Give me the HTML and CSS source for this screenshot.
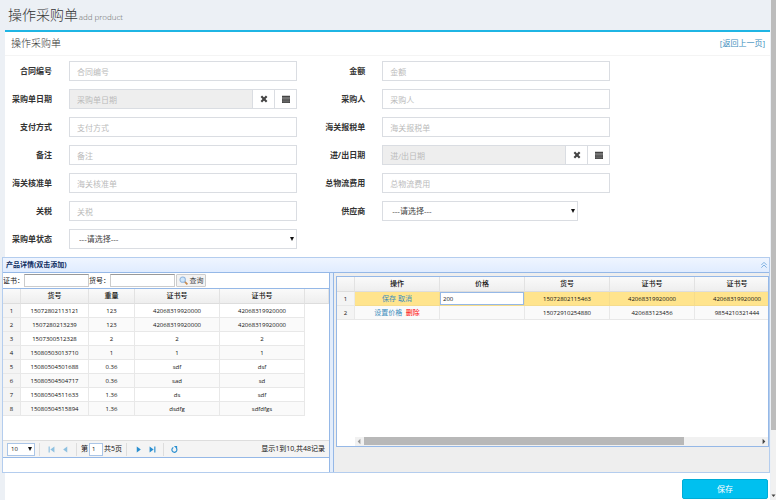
FILE: index.html
```html
<!DOCTYPE html>
<html lang="zh-CN">
<head>
    <meta charset="UTF-8">
    <meta name="viewport" content="width=device-width, initial-scale=1.0">
    <title>操作采购单</title>
    <link rel="stylesheet" href="styles.css">
</head>
<body>
    <div class="page">
        <header class="content-header">
            <h1>操作采购单 <small>add product</small></h1>
        </header>

        <main class="box">
            <div class="box-header">
                <h2>操作采购单</h2>
                <a href="#">[返回上一页]</a>
            </div>

            <!-- 采购单表单 -->
            <form class="order-form" id="orderForm">
                <label for="contractNo">合同编号</label>
                <input class="form-control" id="contractNo" type="text" placeholder="合同编号">
                <label for="amount">金额</label>
                <input class="form-control" id="amount" type="text" placeholder="金额">

                <label for="orderDate">采购单日期</label>
                <div class="input-group">
                    <input class="form-control" id="orderDate" type="text" placeholder="采购单日期" readonly>
                    <button type="button" class="addon" aria-label="清除">
                        <svg viewBox="0 0 12 12"><path d="M2 2l8 8M10 2l-8 8" stroke="#444" stroke-width="3.2"/></svg>
                    </button>
                    <button type="button" class="addon" aria-label="选择日期">
                        <svg viewBox="0 0 12 12"><path d="M0 1h12v3H0zM0 5h12v7H0z" fill="#444"/><path d="M0 7.300h12M0 9.600h12M3 5v7M6 5v7M9 5v7" stroke="#999" stroke-width=".5"/></svg>
                    </button>
                </div>
                <label for="buyer">采购人</label>
                <input class="form-control" id="buyer" type="text" placeholder="采购人">

                <label for="payment">支付方式</label>
                <input class="form-control" id="payment" type="text" placeholder="支付方式">
                <label for="customsBill">海关报税单</label>
                <input class="form-control" id="customsBill" type="text" placeholder="海关报税单">

                <label for="remark">备注</label>
                <input class="form-control" id="remark" type="text" placeholder="备注">
                <label for="inOutDate">进/出日期</label>
                <div class="input-group">
                    <input class="form-control" id="inOutDate" type="text" placeholder="进/出日期" readonly>
                    <button type="button" class="addon" aria-label="清除">
                        <svg viewBox="0 0 12 12"><path d="M2 2l8 8M10 2l-8 8" stroke="#444" stroke-width="3.2"/></svg>
                    </button>
                    <button type="button" class="addon" aria-label="选择日期">
                        <svg viewBox="0 0 12 12"><path d="M0 1h12v3H0zM0 5h12v7H0z" fill="#444"/><path d="M0 7.300h12M0 9.600h12M3 5v7M6 5v7M9 5v7" stroke="#999" stroke-width=".5"/></svg>
                    </button>
                </div>

                <label for="approval">海关核准单</label>
                <input class="form-control" id="approval" type="text" placeholder="海关核准单">
                <label for="logistics">总物流费用</label>
                <input class="form-control" id="logistics" type="text" placeholder="总物流费用">

                <label for="tariff">关税</label>
                <input class="form-control" id="tariff" type="text" placeholder="关税">
                <label for="supplier">供应商</label>
                <div class="select-wrap supplier">
                    <select class="form-control" id="supplier"><option>---请选择---</option></select>
                </div>

                <label for="orderState">采购单状态</label>
                <div class="select-wrap">
                    <select class="form-control" id="orderState"><option>---请选择---</option></select>
                </div>
            </form>

            <!-- 产品详情 -->
            <section class="panel">
                <div class="panel-header">
                    <h3>产品详情(双击添加)</h3>
                    <button type="button" class="collapse" aria-label="收起">
                        <svg viewBox="0 0 12 12"><path d="M2 6l4-4 4 4M2 10l4-4 4 4" fill="none" stroke="#6fa8dc" stroke-width="1.3"/></svg>
                    </button>
                </div>
                <div class="panel-body">
                    <div class="product-list">
                        <div class="toolbar">
                            <label for="certNo">证书：</label>
                            <input id="certNo" type="text">
                            <label for="itemNo">货号：</label>
                            <input id="itemNo" type="text">
                            <button type="button">
                                <svg viewBox="0 0 16 16"><path d="M10 10l5 5" stroke="#c98a4b" stroke-width="3"/><circle cx="6.500" cy="6.500" r="4.800" fill="#cfe6fa" stroke="#8fb4dd" stroke-width="1.800"/></svg>
                                查询
                            </button>
                        </div>
                        <div class="grid-view">
                            <table class="datagrid left-grid">
                                <colgroup>
                                    <col class="c-num"><col class="c-item"><col class="c-weight"><col class="c-cert"><col class="c-cert"><col>
                                </colgroup>
                                <thead>
                                    <tr><th></th><th>货号</th><th>重量</th><th>证书号</th><th>证书号</th><th></th></tr>
                                </thead>
                                <tbody>
                                    <tr><td>1</td><td>15072802113121</td><td>123</td><td>42068319920000</td><td>42068319920000</td></tr>
                                    <tr><td>2</td><td>1507280213239</td><td>123</td><td>42068319920000</td><td>42068319920000</td></tr>
                                    <tr><td>3</td><td>1507300512328</td><td>2</td><td>2</td><td>2</td></tr>
                                    <tr><td>4</td><td>15080503013710</td><td>1</td><td>1</td><td>1</td></tr>
                                    <tr><td>5</td><td>15080504501688</td><td>0.36</td><td>sdf</td><td>dsf</td></tr>
                                    <tr><td>6</td><td>15080504504717</td><td>0.36</td><td>sad</td><td>sd</td></tr>
                                    <tr><td>7</td><td>15080504511633</td><td>1.36</td><td>ds</td><td>sdf</td></tr>
                                    <tr><td>8</td><td>15080504515894</td><td>1.36</td><td>dsdfg</td><td>sdfdfgs</td></tr>
                                </tbody>
                            </table>
                        </div>
                        <div class="pager">
                            <div class="select-wrap">
                                <select aria-label="每页条数"><option>10</option></select>
                            </div>
                            <span class="sep"></span>
                            <button type="button" class="off" aria-label="首页"><svg viewBox="0 0 12 12"><path d="M1 1h2v10H1zM11 1v10L4 6z"/></svg></button>
                            <button type="button" class="off" aria-label="上一页"><svg viewBox="0 0 12 12"><path d="M9 1v10L2 6z"/></svg></button>
                            <span class="sep"></span>
                            <label for="pageNo">第</label>
                            <input id="pageNo" type="text" value="1">
                            <span>共5页</span>
                            <span class="sep"></span>
                            <button type="button" aria-label="下一页"><svg viewBox="0 0 12 12"><path d="M3 1v10l7-5z"/></svg></button>
                            <button type="button" aria-label="末页"><svg viewBox="0 0 12 12"><path d="M9 1h2v10H9zM1 1v10l7-5z"/></svg></button>
                            <span class="sep"></span>
                            <button type="button" aria-label="刷新"><svg viewBox="0 0 12 12"><path d="M4 2.600a4.300 4.300 0 1 0 5 1" fill="none" stroke="#2a8fd0" stroke-width="2"/><path d="M5 0h5.500v5.500z"/></svg></button>
                            <span class="total">显示1到10,共48记录</span>
                        </div>
                    </div>

                    <div class="order-items">
                        <div class="items-grid">
                            <div class="grid-view">
                                <table class="datagrid right-grid">
                                    <colgroup>
                                        <col class="c-num"><col class="c-cert"><col class="c-cert"><col class="c-cert"><col class="c-cert"><col class="c-cert">
                                    </colgroup>
                                    <thead>
                                        <tr><th></th><th>操作</th><th>价格</th><th>货号</th><th>证书号</th><th>证书号</th></tr>
                                    </thead>
                                    <tbody>
                                        <tr class="selected"><td>1</td><td class="action"><a href="#">保存</a> <a href="#">取消</a></td><td class="edit"><input type="text" value="200" aria-label="价格"></td><td>15072802115463</td><td>42068319920000</td><td>42068319920000</td></tr>
                                        <tr><td>2</td><td class="action"><a href="#">设置价格</a>&nbsp; <a href="#" class="delete">删除</a></td><td></td><td>15072910254880</td><td>420683123456</td><td>9854210321444</td></tr>
                                    </tbody>
                                </table>
                            </div>
                            <div class="h-scroll">
                                <svg viewBox="0 0 10 10"><path d="M6 2v6L3 5z" fill="#999"/></svg>
                                <div class="track"><div class="thumb"></div></div>
                                <svg viewBox="0 0 10 10"><path d="M4 2v6l3-3z" fill="#444"/></svg>
                            </div>
                        </div>
                    </div>
                </div>
            </section>

            <div class="box-footer">
                <button type="submit" form="orderForm" class="save">保存</button>
            </div>
        </main>
    </div>

    <div class="v-scroll">
        <div class="thumb"></div>
        <svg viewBox="0 0 10 10"><path d="M1 3h8L5 8z" fill="#444"/></svg>
    </div>
</body>
</html>
```

FILE: styles.css
```css
* {
    margin: 0;
    padding: 0;
    box-sizing: border-box;
}

body {
    display: flex;
    min-height: 100vh;
    background: #ecf0f5;
    color: #333;
    font-family: "Open Sans", "Noto Sans CJK SC", sans-serif;
    font-size: 8px;
    line-height: 12px;
}

button,
input,
select {
    font: inherit;
    color: inherit;
    border-radius: 0;
    outline: none;
}

button {
    cursor: pointer;
}

a {
    color: #3c8dbc;
    text-decoration: none;
}

svg {
    display: block;
    flex: none;
}

.page {
    flex: 1;
    min-width: 0;
    display: flex;
    flex-direction: column;
    padding: 0 1px 0 5px;
}

.content-header {
    height: 30px;
    padding: 5px 3px;
}

.content-header h1 {
    font-size: 14px;
    line-height: 20px;
    font-weight: 300;
    color: #333;
}

.content-header small {
    margin-left: -3px;
    font-size: 8px;
    color: #666;
}

/* 主体 */
.box {
    flex: 1;
    background: #fff;
    border-top: 2px solid #1fb5e4;
}

.box-header {
    display: flex;
    justify-content: space-between;
    align-items: center;
    height: 24px;
    padding: 0 5px 2px 6px;
    border-bottom: 1px solid #f4f4f4;
}

.box-header h2 {
    font-size: 10px;
    font-weight: 300;
    color: #333;
}

/* 表单 */
.order-form {
    display: grid;
    grid-template-columns: 47px 8fr 51px 8fr 5fr;
    gap: 8px 17px;
    align-items: center;
    padding: 5px 0 8px;
}

.order-form > label {
    font-weight: 700;
    text-align: right;
    white-space: nowrap;
}

.order-form > label:nth-of-type(odd) {
    grid-column: 1;
}

.form-control {
    width: 100%;
    min-width: 0;
    height: 20px;
    padding: 0 7px;
    border: 1px solid #dadde2;
    background: #fff;
    color: #444;
}

.form-control::placeholder {
    color: #bbb;
}

.form-control[readonly] {
    background: #eee;
}

.input-group {
    display: flex;
}

.addon {
    display: flex;
    flex: 0 0 22px;
    align-items: center;
    justify-content: center;
    border: 1px solid #dadde2;
    border-left: 0;
    background: #fff;
}

.addon svg {
    width: 8px;
    height: 8px;
}

.select-wrap {
    position: relative;
}

.select-wrap select {
    appearance: none;
}

.select-wrap .form-control {
    padding-left: 9px;
}

.select-wrap::after {
    content: "";
    position: absolute;
    top: 50%;
    right: 3px;
    margin-top: -2px;
    border: 2px solid transparent;
    border-top: 4px solid #111;
    border-bottom: 0;
    pointer-events: none;
}

.supplier {
    width: 86%;
}

/* 产品详情面板 */
.panel {
    margin-left: -3px;
    border: 1px solid #b4cdee;
}

.panel-header {
    display: flex;
    align-items: center;
    justify-content: space-between;
    height: 15px;
    padding: 0 1px 0 3px;
    background: linear-gradient(#eff5ff, #e0ecff);
    border-bottom: 1px solid #95b8e7;
}

.panel-header h3 {
    font-size: 7px;
    font-weight: 700;
    color: #0e2d5f;
}

.collapse {
    border: 0;
    background: none;
}

.collapse svg {
    width: 8px;
    height: 8px;
}

.panel-body {
    display: grid;
    grid-template-columns: 3fr 4fr;
    gap: 3px;
    height: 199px;
    background: #e3edfb;
    font-size: 7px;
    color: #111;
}

.product-list,
.order-items {
    min-width: 0;
    overflow: hidden;
}

.product-list {
    display: flex;
    flex-direction: column;
    padding-bottom: 14px;
    background: #fff;
    border-right: 1px solid #95b8e7;
}

.toolbar {
    display: flex;
    align-items: center;
    height: 15px;
    white-space: nowrap;
}

.toolbar label {
    width: 21px;
}

.toolbar input {
    width: 65px;
    height: 13px;
    border: 1px solid #ccc;
    border-top-color: #999;
}

.toolbar button {
    display: flex;
    align-items: center;
    justify-content: center;
    gap: 2px;
    width: 30px;
    height: 13px;
    margin-left: 1px;
    border: 1px solid #ccc;
    border-radius: 1px;
    background: #f3f3f3;
    color: #444;
}

.toolbar svg {
    width: 9px;
    height: 9px;
}

.grid-view {
    flex: 1;
    overflow: hidden;
    border-top: 1px solid #95b8e7;
}

.datagrid {
    table-layout: fixed;
    border-collapse: separate;
    border-spacing: 0;
    font-size: 6px;
    line-height: 12px;
    text-align: center;
}

.left-grid {
    width: 100%;
}

.right-grid {
    width: 443px;
}

.c-num {
    width: 18px;
}

.c-item {
    width: 68px;
}

.c-weight {
    width: 46px;
}

.c-cert {
    width: 85px;
}

.datagrid th {
    height: 15px;
    font-size: 7px;
    font-weight: 500;
    background: linear-gradient(#fafafa, #eee);
    border-right: 1px solid #e2e2e2;
    border-bottom: 1px solid #ddd;
}

.datagrid td {
    height: 14px;
    border-right: 1px solid #e8e8e8;
    border-bottom: 1px solid #e8e8e8;
}

.datagrid tbody tr:nth-child(even) {
    background: #fafafa;
}

.datagrid td:first-child {
    background: #f4f4f4;
}

.datagrid .selected td:not(:first-child) {
    background: #ffe48d;
    border-color: #f5dc8c;
}

.datagrid .action {
    font-size: 7px;
}

.datagrid .delete {
    color: #f00;
}

.edit input {
    display: block;
    width: 100%;
    height: 13px;
    padding: 0 2px;
    border: 1px solid #95b8e7;
    background: #fff;
}

/* 分页 */
.pager {
    display: flex;
    align-items: center;
    height: 18px;
    padding: 0 4px;
    background: #f4f4f4;
    border-top: 1px solid #ddd;
    border-bottom: 1px solid #95b8e7;
    white-space: nowrap;
}

.pager select {
    display: block;
    width: 28px;
    height: 13px;
    padding-left: 3px;
    border: 1px solid #aac5e7;
    background: #fff;
    font-size: 6px;
    line-height: 11px;
}

.pager .sep {
    width: 1px;
    height: 13px;
    margin: 0 4px;
    background: #ddd;
}

.pager button {
    width: 14px;
    border: 0;
    background: none;
}

.pager button svg {
    width: 7px;
    height: 7px;
    margin: 0 auto;
    fill: #2a8fd0;
}

.pager .off {
    opacity: 0.5;
}

.pager button:last-of-type {
    width: 12px;
}

.pager input {
    width: 14px;
    height: 13px;
    margin: 0 1px;
    padding-left: 2px;
    border: 1px solid #aac5e7;
    background: #fff;
    font-size: 6px;
}

.pager .total {
    margin-left: auto;
}

.order-items {
    padding: 3px 0 0 2px;
    background: #eee;
    border-left: 1px solid #95b8e7;
}

.items-grid {
    display: flex;
    flex-direction: column;
    height: 171px;
    background: #fff;
    border: 1px solid #95b8e7;
    border-top: 0;
}

.h-scroll {
    display: flex;
    height: 9px;
    margin-left: 18px;
    background: #f1f1f1;
}

.h-scroll svg {
    width: 9px;
    height: 9px;
}

.h-scroll .track {
    flex: 1;
}

.h-scroll .thumb {
    width: 81%;
    height: 8px;
    background: #b8b8b8;
}

.box-footer {
    display: flex;
    justify-content: flex-end;
    padding: 6px 2px 1px;
}

.save {
    width: 86px;
    height: 20px;
    border: 1px solid #00acd6;
    border-radius: 2px;
    background: #00c0ef;
    color: #fff;
}

/* 滚动条 */
.v-scroll {
    display: flex;
    flex-direction: column;
    justify-content: space-between;
    flex: 0 0 5px;
    background: #f1f1f1;
}

.v-scroll .thumb {
    height: 86%;
    background: #bcbcbc;
}

.v-scroll svg {
    width: 5px;
    height: 9px;
}
```
